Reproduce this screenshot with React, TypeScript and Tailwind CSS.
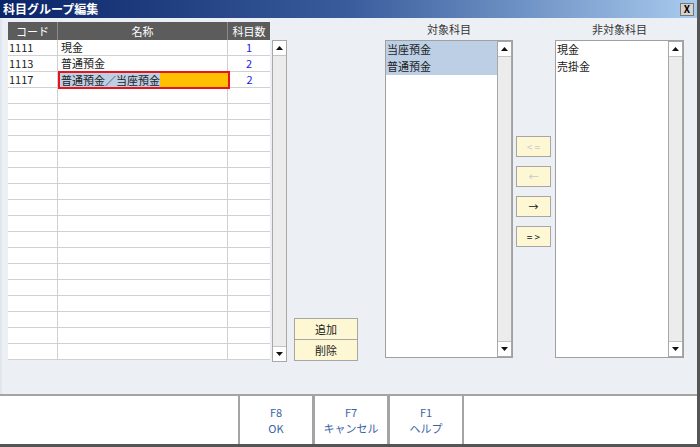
const jp = { fontFamily: '"Noto Sans CJK JP", "Liberation Sans", sans-serif' };

type Row = { code: string; name: string; count: string };

const rows: Row[] = [
  { code: "1111", name: "現金", count: "1" },
  { code: "1113", name: "普通預金", count: "2" },
  { code: "1117", name: "普通預金／当座預金", count: "2" },
];

function ScrollBar({ h }: { h: string }) {
  return (
    <div className={`w-[15px] ${h} flex flex-col bg-[#ececec] border border-[#a8a8a8]`}>
      <div className="h-[15px] bg-white border-b border-[#c4c4c4] flex items-center justify-center">
        <svg width="7" height="4" viewBox="0 0 7 4"><path d="M0 4 L3.5 0 L7 4 Z" fill="#111" /></svg>
      </div>
      <div className="flex-1" />
      <div className="h-[15px] bg-white border-t border-[#c4c4c4] flex items-center justify-center">
        <svg width="7" height="4" viewBox="0 0 7 4"><path d="M0 0 L3.5 4 L7 0 Z" fill="#111" /></svg>
      </div>
    </div>
  );
}

function ListBox({ label, items, selected }: { label: string; items: string[]; selected: boolean }) {
  return (
    <div className="flex flex-col">
      <div className="h-[18px] text-[11px] text-[#333] text-center leading-[14px]">{label}</div>
      <div className="h-[318px] flex bg-white border border-[#a0a0a0]">
        <div className="flex-1 flex flex-col">
          {items.map((it) => (
            <div
              key={it}
              className={`h-[17px] pl-[1px] text-[11px] leading-[17px] text-[#222] ${selected ? "bg-[#bccfe5]" : ""}`}
            >
              {it}
            </div>
          ))}
        </div>
        <ScrollBar h="h-[316px]" />
      </div>
    </div>
  );
}

function ArrowBtn({ text, disabled }: { text: string; disabled?: boolean }) {
  return (
    <div
      className={`w-[35px] h-[21px] bg-[#fdf7d4] border border-[#a6a6a6] flex items-center justify-center text-[10px] ${
        disabled ? "text-[#c8c8c8]" : "text-[#111]"
      }`}
    >
      {text}
    </div>
  );
}

export default function App() {
  const empty = Array.from({ length: 17 }, (_, i) => i);
  return (
    <div style={jp} className="w-[700px] h-[447px] flex flex-col bg-[#ecf0f5] border-r-[3px] border-b-[3px] border-[#555]">
      {/* Title bar */}
      <div className="h-[18px] flex items-center justify-between px-[3px] bg-gradient-to-r from-[#0a2468] via-[#3a5c9c] to-[#a9cbee]">
        <span className="text-white text-[12px] font-bold leading-none">科目グループ編集</span>
        <div className="w-[14px] h-[13px] bg-[#d6d3ce] border border-[#777] flex items-center justify-center text-[10px] font-bold leading-none text-black">
          X
        </div>
      </div>

      {/* Body */}
      <div className="flex-1 flex pl-[6px] pt-[4px] border-l-[2px] border-[#dfe6ee]">
        {/* Grid */}
        <div className="w-[262px] flex flex-col">
          <div className="h-[18px] flex bg-[#5c5c5c] text-white text-[11px] leading-[18px]">
            <div className="w-[50px] text-center border-r border-[#8a8a8a]">コード</div>
            <div className="w-[170px] text-center border-r border-[#8a8a8a]">名称</div>
            <div className="flex-1 text-center">科目数</div>
          </div>
          <div className="bg-white flex flex-col text-[11px] text-[#222]">
            {rows.map((r, i) => (
              <div key={r.code} className="h-[16px] flex border-b border-[#d0d0d0] leading-[15px]">
                <div className="w-[50px] pl-[1px] border-r border-[#d0d0d0]">{r.code}</div>
                {i === 2 ? (
                  <div className="w-[172px] -mr-[1px] -mt-[1px] h-[18px] border-2 border-[#e8141c] bg-[#ffc000] relative z-10 flex items-center">
                    <span className="bg-[#bccfe5] pl-[1px] leading-[14px]">{r.name}</span>
                  </div>
                ) : (
                  <div className="w-[170px] pl-[3px] border-r border-[#d0d0d0]">{r.name}</div>
                )}
                <div className="flex-1 text-center text-[#2222e0]">{r.count}</div>
              </div>
            ))}
            {empty.map((i) => (
              <div key={i} className="h-[16px] flex border-b border-[#d0d0d0]">
                <div className="w-[50px] border-r border-[#d0d0d0]" />
                <div className="w-[170px] border-r border-[#d0d0d0]" />
                <div className="flex-1" />
              </div>
            ))}
          </div>
        </div>

        <div className="ml-[2px] mt-[18px]">
          <ScrollBar h="h-[322px]" />
        </div>

        {/* Add / delete */}
        <div className="ml-[7px] mt-[296px] flex flex-col">
          <div className="w-[64px] h-[22px] bg-[#fdf7d4] border border-[#a6a6a6] flex items-center justify-center text-[11px] text-[#222]">
            追加
          </div>
          <div className="w-[64px] h-[22px] -mt-[1px] bg-[#fdf7d4] border border-[#a6a6a6] flex items-center justify-center text-[11px] text-[#222]">
            削除
          </div>
        </div>

        <div className="ml-[27px]">
          <div className="w-[128px]">
            <ListBox label="対象科目" items={["当座預金", "普通預金"]} selected />
          </div>
        </div>

        {/* Move buttons */}
        <div className="ml-[3px] mt-[114px] flex flex-col gap-[9px]">
          <ArrowBtn text="< =" disabled />
          <ArrowBtn text="←" disabled />
          <ArrowBtn text="→" />
          <ArrowBtn text="= >" />
        </div>

        <div className="ml-[4px]">
          <div className="w-[129px]">
            <ListBox label="非対象科目" items={["現金", "売掛金"]} selected={false} />
          </div>
        </div>
      </div>

      {/* Footer */}
      <div className="h-[50px] bg-white border-t-2 border-[#a4a4a4] flex pl-[238px]">
        {[
          ["F8", "OK"],
          ["F7", "キャンセル"],
          ["F1", "ヘルプ"],
        ].map(([k, l]) => (
          <div
            key={k}
            className="w-[76px] -mr-[1px] flex flex-col items-center justify-center border-x-2 border-[#a4a4a4] text-[11px] leading-[16px] text-[#3b64a6]"
          >
            <span>{k}</span>
            <span>{l}</span>
          </div>
        ))}
      </div>
    </div>
  );
}
